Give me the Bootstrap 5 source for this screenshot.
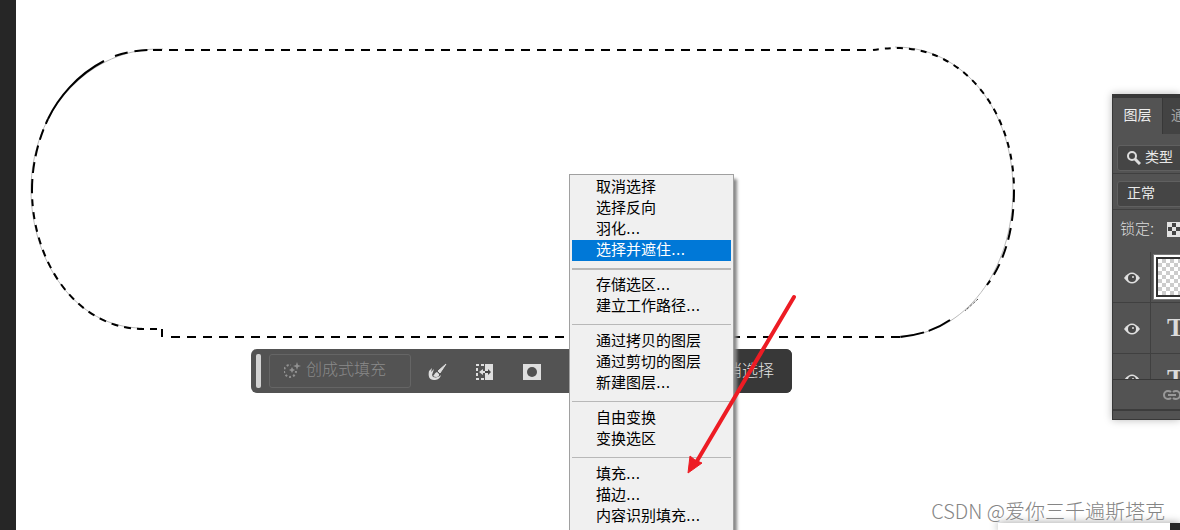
<!DOCTYPE html>
<html lang="zh-CN">
<head>
<meta charset="utf-8">
<meta name="viewport" content="width=device-width, initial-scale=1">
<title>选择并遮住</title>
<link href="https://cdn.jsdelivr.net/npm/bootstrap@5.3.0/dist/css/bootstrap.min.css" rel="stylesheet">
<style>
  body { font-family: "Liberation Sans", "Noto Sans CJK SC", sans-serif; font-size: 15px; background: #fff; }
  .tool-edge { width: 16px; background: #262626; }
  .marquee { left: 14px; top: 40px; width: 1000px; height: 310px; }

  .task-bar { left: 235px; top: 349px; width: 541px; height: 44px; border-radius: 6px; background: #535353; font-size: 16px; }
  .grip { width: 5px; height: 34px; border-radius: 2px; background: #d2d2d2; margin: 0 8px 0 5px; }
  .btn-fill { width: 142px; height: 34px; border: 1px solid #656565; border-radius: 3px; color: #8a8a8a; background: none; font-weight: 300; line-height: 30px; padding: 0 0 2px 14px; gap: 2px; }
  .tool-set { gap: 23px; padding-left: 15px; }
  .btn-tool { width: 24px; height: 24px; color: #dedede; background: none; border: 0; line-height: 22px; }
  .btn-deselect { width: 100px; background: #383838; color: #e4e4e4; border: 0; border-radius: 0 6px 6px 0; font-weight: 300; }

  .ctx-menu { left: 553px; top: 174px; bottom: -2px; width: 165px; padding: 2px; background: #f0f0f0; border: 1px solid #a0a0a0; box-shadow: 4px 4px 3px -1px #888; }
  .ctx-menu button { height: 21px; line-height: 19px; padding: 0 0 0 24px; border: 0; background: none; color: #000; text-align: left; flex: none; font-family: "DejaVu Sans", "Noto Sans CJK SC", sans-serif; }
  .ctx-menu .chosen { background: #0078d7; color: #fff; }
  .ctx-menu hr { height: 1px; margin: 7px 0 6px; border: 0; background: #b8b8b8; opacity: 1; flex: none; }
  .ctx-menu .chosen + hr { height: 2px; margin-bottom: 5px; }
  .pointer { left: 660px; top: 285px; width: 130px; height: 195px; }

  .layers { width: 68px; margin-top: 94px; height: 326px; background: #535353; border: 1px solid #383838; border-right: 0; border-top-width: 4px; box-shadow: 0 0 8px #bbb; color: #dcdcdc; font-size: 14px; }
  .tabs { height: 36px; background: #434343; }
  .tabs button { height: 36px; border: 0; padding: 0 0 2px; background: none; color: #a5a5a5; white-space: nowrap; }
  .tabs .current { width: 50px; background: #535353; color: #eee; border-right: 1px solid #383838; }
  .picker { height: 26px; width: 100px; margin-left: 4px; border: 1px solid #606060; border-radius: 3px; background: #454545; color: #e8e8e8; text-align: left; padding: 0 0 0 9px; white-space: nowrap; }
  .strip { height: 36px; flex: none; border-bottom: 1px solid #404040; }
  .lock-strip { height: 38px; padding: 0 0 0 7px; gap: 13px; font-size: 15px; font-weight: 300; }
  .layer-row { height: 51px; flex: none; border-bottom: 1px solid #404040; }
  .eye { width: 38px; border: 0; border-right: 1px solid #404040; background: none; padding: 0; }
  .thumb { width: 60px; height: 44px; border: 2px solid #fff; outline: 1px solid #777; margin-left: 3px;
    background: conic-gradient(#ccc 25%, #fff 0 50%, #ccc 0 75%, #fff 0) 0 0 / 8px 8px content-box, #333; padding: 2px; }
  .type-mark { font: bold 26px "Liberation Serif", serif; padding-left: 16px; }
  .layers-foot { height: 32px; border-top: 1px solid #383838; border-bottom: 2px solid #3c3c3c; padding-left: 50px; }

  .lower-window { right: 0; bottom: 0; width: 182px; height: 7px; background: #fff; border-right: 10px solid #262626; box-shadow: 0 0 9px #999; }
  .watermark { right: 15px; bottom: 4px; font: 300 20px/30px "Noto Sans CJK SC", sans-serif; color: #858585; }
</style>
</head>
<body class="vh-100 overflow-hidden d-flex position-relative">
<aside class="tool-edge flex-shrink-0"></aside>

<main class="flex-grow-1 position-relative">
  <svg class="marquee position-absolute" viewBox="30 40 1000 310" fill="none" stroke="#000" stroke-width="2" aria-label="选区">
    <path stroke="#bbb" stroke-width="1" d="M163 49C90 47 31 110 31 190M895 47C965 47 1013 112 1013 190C1013 270 965 335 900 336M31 190C31 260 75 328 142 328"/>
    <path d="M153 50H870" stroke-dasharray="9 7"/>
    <path d="M873 50Q885 48 900 48C965 50 1014 112 1014 190" stroke-dasharray="6 6"/>
    <path d="M1014 190C1014 235 1002 265 987 285" stroke-dasharray="12 7"/>
    <path d="M978 299L965 311" stroke-width="1" stroke-dasharray="1 1"/>
    <path d="M950 320Q930 334 900 337" stroke-dasharray="24 5"/>
    <path d="M171 337H900" stroke-dasharray="9 7"/>
    <path d="M162 337V329" />
    <path d="M157 329H142C75 328 32 260 32 190" stroke-dasharray="7 6"/>
    <path d="M32 190C32 165 38 140 48 119" stroke-dasharray="11 6"/>
    <path d="M48 119C58 98 77 75 104 61"/>
    <path d="M115 56Q133 50 150 50" stroke-dasharray="13 7"/>
  </svg>

  <div class="task-bar position-absolute d-flex align-items-center" role="toolbar">
    <span class="grip flex-shrink-0"></span>
    <button type="button" class="btn-fill d-flex align-items-center flex-shrink-0">
      <svg width="20" height="18" viewBox="0 0 20 18" aria-hidden="true"><path d="M14 9a6 6 0 1 1-5-6" transform="translate(-2 1)" fill="none" stroke="#929292" stroke-width="2" stroke-dasharray="2 2"/><path d="M13 1l1 3 3 1-3 1-1 3-1-3-3-1 3-1zM8 6l1 2 2 1-2 1-1 2-1-2-2-1 2-1z" fill="#929292"/></svg>
      <span class="text-nowrap">创成式填充</span>
    </button>
    <div class="tool-set d-flex">
      <button type="button" class="btn-tool p-0" aria-label="画笔"><svg width="20" height="18" viewBox="0 0 20 18"><path d="M18 1L10 8l2 2z" fill="currentColor" stroke="currentColor"/><path d="M9 9c-3 1-2 3-4 4 3 2 7 1 6-2z" fill="currentColor"/><path d="M1 8l3-3-1 4 3-3-2 6 1 2c3 1 6 0 8-2-1 4-4 5-7 5-5 0-6-4-5-9z" fill="currentColor"/></svg></button>
      <button type="button" class="btn-tool p-0" aria-label="反选"><svg width="18" height="18" viewBox="0 0 18 18"><path d="M9 1h8v16H9z" fill="currentColor"/><path d="M8 2H1v14h7" fill="none" stroke="currentColor" stroke-width="2" stroke-dasharray="3 2"/><path d="M3 9l4-3v2h2v2H7v2z" fill="currentColor"/><path d="M15 9l-3-3v2H9v2h3v2z" fill="#444"/></svg></button>
      <button type="button" class="btn-tool p-0" aria-label="蒙版"><svg width="18" height="16" viewBox="0 0 18 16"><path d="M0 0h18v16H0z" fill="currentColor"/><circle cx="9" cy="8" r="5" fill="#505050"/></svg></button>
    </div>
    <button type="button" class="btn-deselect ms-auto align-self-stretch">取消选择</button>
  </div>

  <div class="ctx-menu position-absolute d-flex flex-column" role="menu">
    <button type="button">取消选择</button>
    <button type="button">选择反向</button>
    <button type="button">羽化...</button>
    <button type="button" class="chosen">选择并遮住...</button>
    <hr>
    <button type="button">存储选区...</button>
    <button type="button">建立工作路径...</button>
    <hr>
    <button type="button">通过拷贝的图层</button>
    <button type="button">通过剪切的图层</button>
    <button type="button">新建图层...</button>
    <hr>
    <button type="button">自由变换</button>
    <button type="button">变换选区</button>
    <hr>
    <button type="button">填充...</button>
    <button type="button">描边...</button>
    <button type="button">内容识别填充...</button>
  </div>

  <svg class="pointer position-absolute" viewBox="676 285 130 195" aria-hidden="true"><path d="M794 297L697 461" stroke="#ed1c24" stroke-width="4" stroke-linecap="round"/><path d="M688 473L690 456 695 460 702 463z" fill="#ed1c24" stroke="#ed1c24"/></svg>
</main>

<aside class="layers flex-shrink-0 overflow-hidden d-flex flex-column">
  <div class="tabs d-flex flex-shrink-0">
    <button type="button" class="current flex-shrink-0">图层</button>
    <button type="button" class="ps-2">通道</button>
  </div>
  <div class="strip d-flex align-items-center pt-1 mt-1">
    <button type="button" class="picker flex-shrink-0"><svg width="14" height="14" viewBox="0 0 14 14" fill="none" stroke="#ddd"><circle cx="5" cy="5" r="4" stroke-width="2"/><path d="M8 8l5 5" stroke-width="3"/></svg> <span>类型</span></button>
  </div>
  <div class="strip d-flex align-items-center pt-1">
    <button type="button" class="picker flex-shrink-0">正常</button>
  </div>
  <div class="lock-strip d-flex align-items-center flex-shrink-0 text-nowrap"><span>锁定:</span>
    <svg class="flex-shrink-0" width="15" height="15" viewBox="0 0 15 15"><path d="M0 0h15v15H0z" fill="#e2e2e2"/><path d="M5 1h4v4H5zM1 5h4v4H1zM9 5h4v4H9zM5 9h4v4H5zM13 1h2v4h-2z" fill="#444"/></svg>
  </div>
  <div class="flex-grow-1 overflow-hidden">
    <div class="layer-row d-flex align-items-center mt-1">
      <button type="button" class="eye h-100 flex-shrink-0" aria-label="可见"><svg width="16" height="12" viewBox="0 0 16 12"><path d="M0 6Q8-5 16 6Q8 17 0 6z" fill="#e0e0e0"/><circle cx="8" cy="6" r="4" fill="#484848"/><circle cx="9" cy="5" r="1" fill="#e0e0e0"/></svg></button>
      <span class="thumb flex-shrink-0"></span>
    </div>
    <div class="layer-row d-flex align-items-center">
      <button type="button" class="eye h-100 flex-shrink-0" aria-label="可见"><svg width="16" height="12" viewBox="0 0 16 12"><path d="M0 6Q8-5 16 6Q8 17 0 6z" fill="#e0e0e0"/><circle cx="8" cy="6" r="4" fill="#484848"/><circle cx="9" cy="5" r="1" fill="#e0e0e0"/></svg></button>
      <span class="type-mark">T</span>
    </div>
    <div class="layer-row d-flex align-items-center">
      <button type="button" class="eye h-100 flex-shrink-0" aria-label="可见"><svg width="16" height="12" viewBox="0 0 16 12"><path d="M0 6Q8-5 16 6Q8 17 0 6z" fill="#e0e0e0"/><circle cx="8" cy="6" r="4" fill="#484848"/><circle cx="9" cy="5" r="1" fill="#e0e0e0"/></svg></button>
      <span class="type-mark">T</span>
    </div>
  </div>
  <div class="layers-foot d-flex align-items-center flex-shrink-0 mb-2">
    <svg class="flex-shrink-0" width="18" height="10" viewBox="0 0 18 10" fill="none" stroke="#999" stroke-width="2"><path d="M8 2Q7 1 5 1a4 4 0 0 0 0 8q2 0 3-1M10 2q1-1 3-1a4 4 0 0 1 0 8q-2 0-3-1M5 5h8"/></svg>
  </div>
</aside>

<div class="lower-window position-absolute"></div>
<div class="watermark position-absolute text-nowrap">CSDN @爱你三千遍斯塔克</div>
</body>
</html>
